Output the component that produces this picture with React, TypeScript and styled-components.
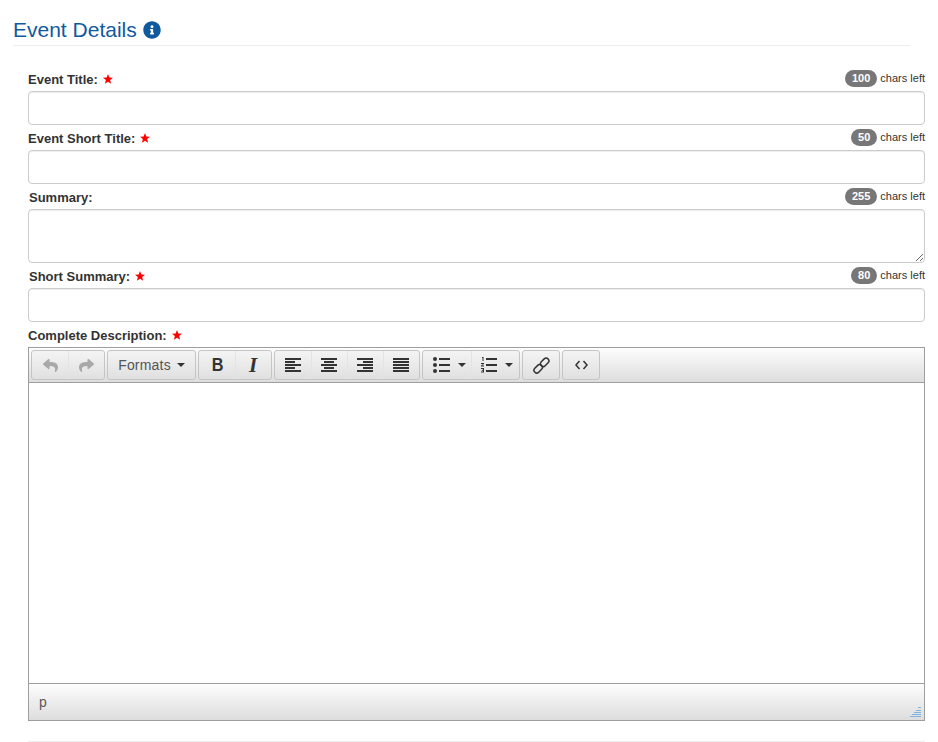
import React from "react";
import styled, { createGlobalStyle } from "styled-components";
import { FaInfoCircle, FaReply, FaShare } from "react-icons/fa";

const Global = createGlobalStyle`
  html, body {
    margin: 0;
    padding: 0;
    background: #fff;
    font-family: "Liberation Sans", Arial, sans-serif;
    color: #333;
  }
  * { box-sizing: border-box; }
`;

const Page = styled.div`
  width: 938px;
  height: 742px;
  overflow: hidden;
  padding: 16px 13px 0;
`;

const Heading = styled.h2`
  display: flex;
  align-items: center;
  gap: 6px;
  width: 897px;
  height: 30px;
  margin: 0 0 20px;
  border-bottom: 1px solid #eee;
  padding: 1px 0 2px;
  font-size: 21px;
  font-weight: 400;
  color: #0f5a9e;
  svg { width: 18px; height: 18px; }
`;

const Form = styled.div`
  width: 897px;
  margin-left: 15px;
`;

const LabelRow = styled.div`
  display: flex;
  justify-content: space-between;
  align-items: center;
  height: 25px;
  padding-top: 1px;
`;

const Label = styled.label<{ $nudge?: boolean }>`
  display: flex;
  align-items: center;
  gap: 5px;
  margin-left: ${(p) => (p.$nudge ? 1 : 0)}px;
  font-size: 13px;
  font-weight: 700;
  color: #333;
`;

const Star = styled.svg`
  width: 10px;
  height: 10px;
  fill: #f00;
`;

const Counter = styled.div`
  display: flex;
  align-items: center;
  gap: 3px;
  margin-top: -2px;
  font-size: 11px;
  color: #333;
`;

const Badge = styled.span`
  min-width: 26px;
  height: 17px;
  padding: 0 7px;
  border-radius: 9px;
  background: #777;
  color: #fff;
  font-size: 11px;
  font-weight: 700;
  line-height: 17px;
  text-align: center;
`;

const Input = styled.input`
  display: block;
  width: 100%;
  height: 34px;
  border: 1px solid #ccc;
  border-radius: 4px;
  box-shadow: inset 0 1px 1px rgba(0, 0, 0, 0.075);
  outline: none;
`;

const Area = styled.textarea`
  display: block;
  width: 100%;
  height: 54px;
  border: 1px solid #ccc;
  border-radius: 4px;
  box-shadow: inset 0 1px 1px rgba(0, 0, 0, 0.075);
  outline: none;
`;

const Editor = styled.div`
  height: 374px;
  border: 1px solid #9e9e9e;
  display: flex;
  flex-direction: column;
`;

const Toolbar = styled.div`
  display: flex;
  gap: 2px;
  height: 35px;
  padding: 2px 2px 0;
  border-bottom: 1px solid #9e9e9e;
  background: linear-gradient(#fdfdfd, #ddd);
`;

const Group = styled.div`
  display: flex;
  height: 30px;
  border: 1px solid #c5c5c5;
  border-radius: 3px;
  background: linear-gradient(#f4f4f4, #e0e0e0);
`;

const Tool = styled.div<{ $w?: number; $muted?: boolean }>`
  display: flex;
  align-items: center;
  justify-content: center;
  gap: 6px;
  width: ${(p) => p.$w ?? 36}px;
  font-size: 14px;
  color: ${(p) => (p.$muted ? "#a8a8a8" : "#333")};
  & + & {
    border-left: 1px solid #e4e4e4;
    padding-right: 1px;
  }
`;

const ListTool = styled(Tool)`
  justify-content: flex-start;
  gap: 8px;
  width: 48px;
  padding-left: 10px;
  & + & { padding-left: 8px; }
`;

const FormatLabel = styled.span`
  letter-spacing: 0.2px;
  color: #555;
`;

const Caret = styled.span`
  width: 0;
  height: 0;
  border-left: 4px solid transparent;
  border-right: 4px solid transparent;
  border-top: 4px solid #333;
`;

const Content = styled.div`
  flex: 1;
  background: #fff;
`;

const StatusBar = styled.div`
  position: relative;
  display: flex;
  align-items: center;
  height: 37px;
  padding-left: 10px;
  border-top: 1px solid #9e9e9e;
  background: linear-gradient(#fdfdfd, #ddd);
  font-size: 14px;
  color: #595959;
`;

const Grip = styled.svg`
  position: absolute;
  right: 3px;
  bottom: 3px;
`;

const Rule = styled.hr`
  height: 1px;
  margin: 20px 0 0;
  border: 0;
  background: #eee;
`;

const BoldGlyph = styled.span`
  font-size: 18px;
  font-weight: 700;
  transform: scaleX(0.9);
`;

const ItalicGlyph = styled.span`
  font-family: "Liberation Serif", serif;
  font-size: 21px;
  font-style: italic;
  font-weight: 700;
`;

const RedStar = () => (
  <Star viewBox="0 0 20 20">
    <polygon points="10,0 12.700,6.900 20,7.400 14.300,12.100 16.200,19.500 10,15.400 3.800,19.500 5.700,12.100 0,7.400 7.300,6.900" />
  </Star>
);

const Lines = ({ rows }: { rows: [number, number][] }) => (
  <svg width="16" height="16" viewBox="0 0 16 16">
    {rows.map(([x, w], i) => (
      <rect key={i} x={x} y={1 + i * 3} width={w} height="2" fill="#333" />
    ))}
  </svg>
);

const BulletIcon = () => (
  <svg width="17" height="16" viewBox="0 0 17 16" fill="#333">
    <circle cx="2" cy="2" r="2" />
    <circle cx="2" cy="8" r="2" />
    <circle cx="2" cy="14" r="2" />
    <rect x="6" y="1" width="11" height="2" />
    <rect x="6" y="7" width="11" height="2" />
    <rect x="6" y="13" width="11" height="2" />
  </svg>
);

const NumberIcon = () => (
  <svg width="17" height="16" viewBox="0 0 17 16" fill="#333">
    <path d="M2 0h1.500v4H2.500V1H2zM1 6h3v.9l-2 1.600h2V9.500H1v-1l2-1.600V6.900H1zM1 11h3v4.500H1v-1h2v-.8H1.800v-.9H3v-.8H1z" />
    <rect x="6" y="1" width="11" height="2" />
    <rect x="6" y="7" width="11" height="2" />
    <rect x="6" y="13" width="11" height="2" />
  </svg>
);

const LinkIcon = () => (
  <svg width="17" height="17" viewBox="0 0 17 17" fill="none" stroke="#333" strokeWidth="1.500">
    <rect x="9" y="0.500" width="5.500" height="9.500" rx="2.700" transform="rotate(45 11.700 5.200)" />
    <rect x="2.500" y="7" width="5.500" height="9.500" rx="2.700" transform="rotate(45 5.200 11.700)" />
  </svg>
);

const CodeIcon = () => (
  <svg width="13" height="10" viewBox="0 0 13 10" fill="none" stroke="#333" strokeWidth="1.500">
    <path d="M4.500 1 1 5l3.500 4M8.500 1 12 5 8.500 9" />
  </svg>
);

const fields = [
  { label: "Event Title:", left: 100, required: true },
  { label: "Event Short Title:", left: 50, required: true },
  { label: "Summary:", left: 255, area: true, nudge: true },
  { label: "Short Summary:", left: 80, required: true, nudge: true },
];

const App = () => {
  return (
    <Page>
      <Global />
      <Heading>
        Event Details <FaInfoCircle />
      </Heading>
      <Form>
        {fields.map((f) => (
          <div key={f.label}>
            <LabelRow>
              <Label $nudge={f.nudge}>
                {f.label} {f.required && <RedStar />}
              </Label>
              <Counter>
                <Badge>{f.left}</Badge> chars left
              </Counter>
            </LabelRow>
            {f.area ? <Area /> : <Input />}
          </div>
        ))}
        <LabelRow>
          <Label>
            Complete Description: <RedStar />
          </Label>
        </LabelRow>
        <Editor>
          <Toolbar>
            <Group>
              <Tool $muted>
                <FaReply size={15} />
              </Tool>
              <Tool $muted>
                <FaShare size={15} />
              </Tool>
            </Group>
            <Group>
              <Tool $w={87}>
                <FormatLabel>Formats</FormatLabel>
                <Caret />
              </Tool>
            </Group>
            <Group>
              <Tool>
                <BoldGlyph>B</BoldGlyph>
              </Tool>
              <Tool>
                <ItalicGlyph>I</ItalicGlyph>
              </Tool>
            </Group>
            <Group>
              <Tool>
                <Lines rows={[[0, 16], [0, 10], [0, 16], [0, 10], [0, 16]]} />
              </Tool>
              <Tool>
                <Lines rows={[[0, 16], [3, 10], [0, 16], [3, 10], [0, 16]]} />
              </Tool>
              <Tool>
                <Lines rows={[[0, 16], [6, 10], [0, 16], [6, 10], [0, 16]]} />
              </Tool>
              <Tool>
                <Lines rows={[[0, 16], [0, 16], [0, 16], [0, 16], [0, 16]]} />
              </Tool>
            </Group>
            <Group>
              <ListTool>
                <BulletIcon />
                <Caret />
              </ListTool>
              <ListTool>
                <NumberIcon />
                <Caret />
              </ListTool>
            </Group>
            <Group>
              <Tool>
                <LinkIcon />
              </Tool>
            </Group>
            <Group>
              <Tool>
                <CodeIcon />
              </Tool>
            </Group>
          </Toolbar>
          <Content />
          <StatusBar>
            p
            <Grip width="11" height="10" viewBox="0 0 11 10" fill="#7fb2dc">
              <rect x="8" y="0" width="3" height="1" />
              <rect x="6" y="3" width="5" height="1" />
              <rect x="4" y="5" width="7" height="1" />
              <rect x="2" y="7" width="9" height="1" />
              <rect x="0" y="9" width="11" height="1" />
            </Grip>
          </StatusBar>
        </Editor>
        <Rule />
      </Form>
    </Page>
  );
};

export default App;
